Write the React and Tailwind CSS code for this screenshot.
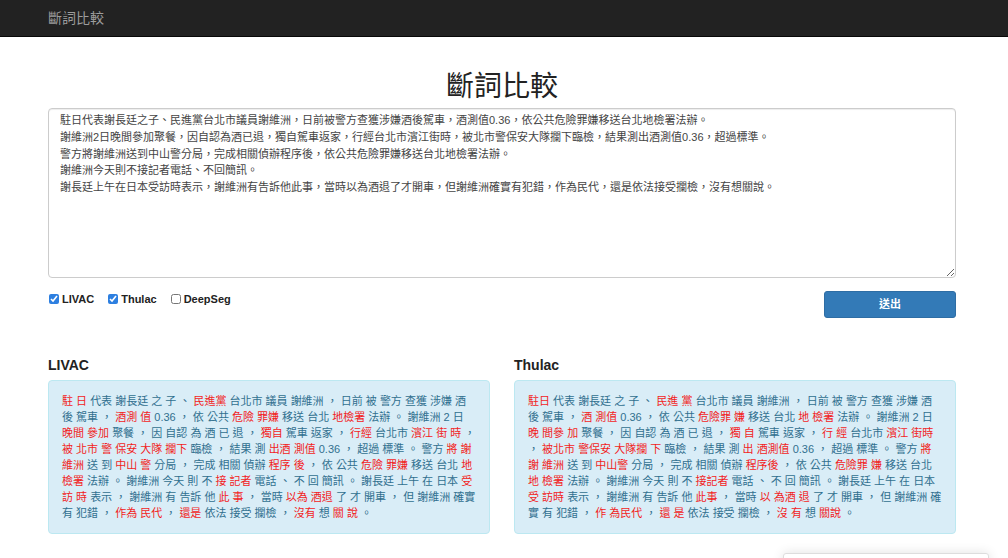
import { useState } from 'react';

const FONT = { fontFamily: '"Liberation Sans", "Noto Sans CJK TC", sans-serif' };

const LIVAC =
  '*駐 *日 代表 謝長廷 之 子 、 *民進黨 台北市 議員 謝維洲 ， 日前 被 警方 查獲 涉嫌 酒後 駕車 ， *酒測 *值 0.36 ， 依 公共 *危險 *罪嫌 移送 台北 *地檢署 法辦 。 謝維洲 2 日 *晚間 *參加 聚餐 ， 因 自認 為 酒 已 退 ， *獨自 駕車 返家 ， *行經 台北市 *濱江 *街 *時 ， *被 *北市 *警 *保安 *大隊 *攔下 臨檢 ， 結果 測 *出酒 *測值 0.36 ， 超過 標準 。 警方 *將 *謝維洲 送 到 *中山 *警 分局 ， 完成 相關 偵辦 *程序 *後 ， 依 公共 *危險 *罪嫌 移送 台北 *地檢署 法辦 。 謝維洲 今天 則 不 *接 *記者 電話 、 不 回 簡訊 。 謝長廷 上午 在 日本 *受訪 *時 表示 ， 謝維洲 有 告訴 他 *此 *事 ， 當時 *以為 *酒退 了 才 開車 ， 但 謝維洲 確實 有 犯錯 ， *作為 *民代 ， *還是 依法 接受 攔檢 ， *沒有 想 *關 *說 。';

const THULAC =
  '*駐日 代表 謝長廷 之 子 、 *民進 *黨 台北市 議員 謝維洲 ， 日前 被 警方 查獲 涉嫌 酒後 駕車 ， *酒 *測值 0.36 ， 依 公共 *危險罪 *嫌 移送 台北 *地 *檢署 法辦 。 謝維洲 2 日 *晚 *間參 *加 聚餐 ， 因 自認 為 酒 已 退 ， *獨 *自 駕車 返家 ， *行 *經 台北市 *濱江 *街時 ， *被北市 *警保安 *大隊攔 *下 臨檢 ， 結果 測 *出 *酒測值 0.36 ， 超過 標準 。 警方 *將 *謝 *維洲 送 到 *中山警 分局 ， 完成 相關 偵辦 *程序後 ， 依 公共 *危險罪 *嫌 移送 台北 *地 *檢署 法辦 。 謝維洲 今天 則 不 *接記者 電話 、 不 回 簡訊 。 謝長廷 上午 在 日本 *受 *訪時 表示 ， 謝維洲 有 告訴 他 *此事 ， 當時 *以 *為酒 *退 了 才 開車 ， 但 謝維洲 確實 有 犯錯 ， *作 *為民代 ， *還 *是 依法 接受 攔檢 ， *沒 *有 想 *關說 。';

const SOURCE = [
  '駐日代表謝長廷之子、民進黨台北市議員謝維洲，日前被警方查獲涉嫌酒後駕車，酒測值0.36，依公共危險罪嫌移送台北地檢署法辦。',
  '謝維洲2日晚間參加聚餐，因自認為酒已退，獨自駕車返家，行經台北市濱江街時，被北市警保安大隊攔下臨檢，結果測出酒測值0.36，超過標準。',
  '警方將謝維洲送到中山警分局，完成相關偵辦程序後，依公共危險罪嫌移送台北地檢署法辦。',
  '謝維洲今天則不接記者電話、不回簡訊。',
  '謝長廷上午在日本受訪時表示，謝維洲有告訴他此事，當時以為酒退了才開車，但謝維洲確實有犯錯，作為民代，還是依法接受攔檢，沒有想關說。',
].join('\n');

const Result = ({ title, text }) => {
  const tokens = text.split(' ');
  return (
    <div className="flex-1 min-w-0">
      <h3 className="text-[14px] leading-[20px] font-semibold text-[#222] mb-[5px]">{title}</h3>
      <div className="bg-[#d9edf7] border border-[#bce8f1] rounded-[4px] px-[13px] py-[12px] text-[11px] leading-[16px] text-[#31708f]">
        {tokens.map((t, i) => {
          const red = t.startsWith('*');
          return (
            <span key={i}>
              <span className={red ? 'text-[#f21d1d]' : ''}>{red ? t.slice(1) : t}</span>
              {i < tokens.length - 1 ? ' ' : ''}
            </span>
          );
        })}
      </div>
    </div>
  );
};

const Check = ({ label, checked, onChange }) => (
  <label className="flex items-center gap-[3px] text-[11px] font-bold text-[#222] cursor-pointer">
    <input
      type="checkbox"
      checked={checked}
      onChange={onChange}
      className="w-[10px] h-[10px] m-0 accent-[#2d7fe0]"
    />
    {label}
  </label>
);

export default function App() {
  const [opts, setOpts] = useState({ LIVAC: true, Thulac: true, DeepSeg: false });
  const toggle = (k) => setOpts({ ...opts, [k]: !opts[k] });

  return (
    <div className="min-h-[558px] bg-white text-[#333]" style={FONT}>
      <nav className="h-[37px] bg-[#222] border-b border-[#080808] flex items-center px-[48px]">
        <span className="text-[14px] text-[#9d9d9d]">斷詞比較</span>
      </nav>

      <div className="w-[908px] ml-[48px]">
        <h1 className="text-[28px] leading-[34px] font-normal text-[#222] text-center mt-[33px] mb-[4px]">
          斷詞比較
        </h1>

        <textarea
          defaultValue={SOURCE}
          className="block w-full h-[170px] border border-[#ccc] rounded-[4px] px-[11px] py-[3px] text-[11px] leading-[16.75px] text-[#444] shadow-[inset_0_1px_1px_rgba(0,0,0,0.075)] outline-none"
        />

        <div className="flex justify-between items-start mt-[13px]">
          <div className="flex items-center gap-[14px] h-[14px] mt-[1px] pl-[1px]">
            <Check label="LIVAC" checked={opts.LIVAC} onChange={() => toggle('LIVAC')} />
            <Check label="Thulac" checked={opts.Thulac} onChange={() => toggle('Thulac')} />
            <Check label="DeepSeg" checked={opts.DeepSeg} onChange={() => toggle('DeepSeg')} />
          </div>
          <button className="w-[132px] h-[27px] bg-[#337ab7] border border-[#2e6da4] rounded-[3px] text-white text-[11px] font-bold">
            送出
          </button>
        </div>

        <div className="flex gap-[24px] mt-[37px]">
          {opts.LIVAC && <Result title="LIVAC" text={LIVAC} />}
          {opts.Thulac && <Result title="Thulac" text={THULAC} />}
        </div>
      </div>

      <div className="fixed left-[783px] top-[553px] w-[206px] h-[30px] bg-white border border-[#ddd] rounded-[3px] shadow-[0_0_12px_rgba(0,0,0,0.12)]" />
    </div>
  );
}
